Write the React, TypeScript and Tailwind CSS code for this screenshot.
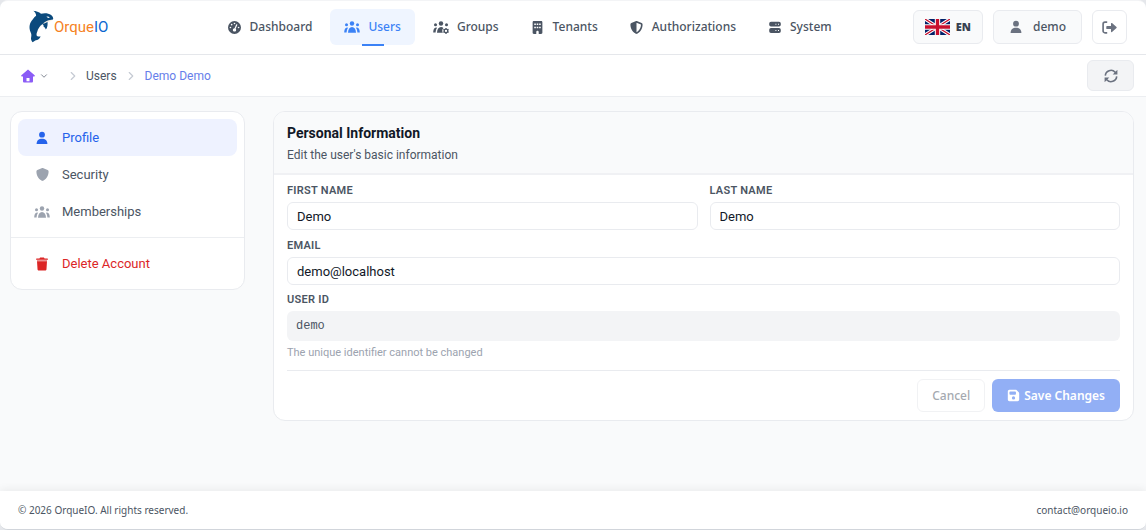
import React, { useState } from "react";
import {
  FaBuilding,
  FaFloppyDisk,
  FaGaugeHigh,
  FaShield,
  FaShieldHalved,
} from "react-icons/fa6";
import { LuChevronDown, LuChevronRight } from "react-icons/lu";

type IconProps = { className?: string };

function PersonIcon({ className }: IconProps) {
  return (
    <svg viewBox="0 0 14 14" fill="currentColor" className={className} aria-hidden="true">
      <circle cx="7" cy="3.700" r="2.900" />
      <path d="M1.600 13c0-3.300 2.200-5.200 5.400-5.200s5.400 1.900 5.400 5.200z" />
    </svg>
  );
}

function PeopleIcon({ className }: IconProps) {
  return (
    <svg viewBox="0 0 16 12" fill="currentColor" className={className} aria-hidden="true">
      <circle cx="8" cy="2.500" r="2.200" />
      <circle cx="2.500" cy="3.700" r="1.500" />
      <circle cx="13.500" cy="3.700" r="1.500" />
      <path d="M4 11.700c.2-3.400 1.700-5.700 4-5.700s3.800 2.300 4 5.700z" />
      <path d="M.2 11.500C.2 8.700 1.100 6.700 3 6.400l1.100.3C3.200 7.900 2.700 9.500 2.600 11.500z" />
      <path d="M15.800 11.500c0-2.800-.9-4.800-2.800-5.100l-1.100.3c.9 1.200 1.400 2.800 1.500 4.800z" />
    </svg>
  );
}

function PeopleGearIcon({ className }: IconProps) {
  return (
    <svg viewBox="0 0 16 13" fill="currentColor" className={className} aria-hidden="true">
      <circle cx="8" cy="2.500" r="2.200" />
      <circle cx="2.500" cy="3.700" r="1.500" />
      <circle cx="13.500" cy="3.700" r="1.500" />
      <path d="M4 11.700c.2-3.400 1.700-5.700 4-5.700 1 0 1.800.4 2.400 1-1.200 1.200-1.500 3.100-.6 4.700z" />
      <path d="M.2 11.500C.2 8.700 1.100 6.700 3 6.400l1.100.3C3.200 7.900 2.700 9.500 2.600 11.500z" />
      <circle cx="13" cy="9.900" r="1.800" fill="none" stroke="currentColor" strokeWidth="1.300" />
      <path
        d="M13 6.900v1M13 11.900v1M10.400 8.400l.9.500M14.700 10.900l.9.500M10.400 11.400l.9-.5M14.700 8.900l.9-.5"
        stroke="currentColor"
        strokeWidth="1.300"
      />
    </svg>
  );
}

function ServerIcon({ className }: IconProps) {
  return (
    <svg viewBox="0 0 12 13" fill="currentColor" className={className} aria-hidden="true">
      <path
        fillRule="evenodd"
        d="M2 .8h8a1.800 1.800 0 0 1 1.800 1.800v1.200A1.800 1.800 0 0 1 10 5.600H2A1.800 1.800 0 0 1 .2 3.800v-1.200A1.800 1.800 0 0 1 2 .8zM6.400 2.700v1h1v-1zM9 2.700v1h1v-1z"
      />
      <path
        fillRule="evenodd"
        d="M2 7h8a1.800 1.800 0 0 1 1.800 1.800v1.400A1.800 1.800 0 0 1 10 12H2a1.800 1.800 0 0 1-1.800-1.800V8.800A1.800 1.800 0 0 1 2 7zM6.400 9v1h1V9zM9 9v1h1V9z"
      />
    </svg>
  );
}

function HomeIcon({ className }: IconProps) {
  return (
    <svg viewBox="0 0 14 14" fill="currentColor" className={className} aria-hidden="true">
      <path
        fillRule="evenodd"
        d="M7 .5 13.600 6.300c.5.500.2 1.200-.4 1.200H12v4.700c0 .8-.5 1.300-1.300 1.300H3.300c-.8 0-1.300-.5-1.300-1.300V7.500H.8c-.6 0-.9-.7-.4-1.200zM5.500 9v3.200h3V9z"
      />
    </svg>
  );
}

function TrashIcon({ className }: IconProps) {
  return (
    <svg viewBox="0 0 12 14" fill="currentColor" className={className} aria-hidden="true">
      <path d="M4.100.5h3.800l.7.900h2.800c.3 0 .5.200.5.500v.8H.1v-.8c0-.3.200-.5.500-.5h2.800z" />
      <path d="M1 4.200h10l-.5 8.100c-.1.800-.6 1.300-1.400 1.300H2.900c-.8 0-1.300-.5-1.400-1.300z" />
      <path d="M1 2.700h10v1.500H1z" opacity=".5" />
    </svg>
  );
}

function LogoutIcon({ className }: IconProps) {
  return (
    <svg viewBox="0 0 15 13" fill="currentColor" className={className} aria-hidden="true">
      <path
        d="M5.200 1.200H3A1.900 1.900 0 0 0 1.100 3.100v6.800A1.900 1.900 0 0 0 3 11.800h2.200"
        fill="none"
        stroke="currentColor"
        strokeWidth="1.700"
      />
      <path d="M5 5h4V2.500c0-.6.600-.8 1-.4l4.500 4c.3.300.3.600 0 .9L10 11c-.4.400-1 .1-1-.4V8.100H5c-.4 0-.7-.3-.7-.7V5.700c0-.4.300-.7.700-.7z" />
    </svg>
  );
}

function RefreshIcon({ className }: IconProps) {
  return (
    <svg viewBox="0 0 14 14" fill="currentColor" className={className} aria-hidden="true">
      <path
        d="M1.300 6.600A5.700 5.700 0 0 1 11.200 3.200l1 1.200M12.700 7.400A5.700 5.700 0 0 1 2.800 10.800l-1-1.200"
        fill="none"
        stroke="currentColor"
        strokeWidth="1.600"
      />
      <path d="M13.400.8v4.700H8.700zM.6 13.200V8.500h4.700z" />
    </svg>
  );
}

function OrcaLogo({ className }: IconProps) {
  return (
    <svg viewBox="84 30 80 102" className={className} aria-hidden="true">
      <path fill="#f7efe3" d="M160 58c-4 5-10 7-18 8l-12 8c-8 4-14 10-17 22l-8 12-6-6 12-32 22-10z" />
      <path
        fill="#0b4a7d"
        d="M99 31c10 1 19 4 25 9 11-3 23-2 31 4 5 4 8 9 6 14-7 1-12 1-18 4-6 4-10 5-14 10-9 6-14 14-17 24-2 5-2 8-1 12 4 3 7 3 12 2-3 7-9 11-15 12-4 2-6 5-10 6-4-5-6-11-4-18 1-5 0-8-2-13-6-14-4-29 7-40 3-5 6-8 10-11 0-6-4-12-10-16z"
      />
      <path fill="#0b4a7d" d="M124 69c8 3 13 1 20-4 1 9 0 18-5 24-2-5-4-8-7-9 1-4-2-8-8-11z" />
      <path fill="#fff" d="M141 49c4-1 8 0 10 3-4 2-8 1-10-3z" />
    </svg>
  );
}

function BritishFlag({ className }: IconProps) {
  return (
    <svg viewBox="0 0 60 38" preserveAspectRatio="none" className={className} aria-hidden="true">
      <path fill="#012169" d="M0 0h60v38H0z" />
      <path d="m0 0 60 38M60 0 0 38" stroke="#fff" strokeWidth="8" />
      <path d="m0 0 60 38M60 0 0 38" stroke="#c8102e" strokeWidth="3" />
      <path d="M30 0v38M0 19h60" stroke="#fff" strokeWidth="13" />
      <path d="M30 0v38M0 19h60" stroke="#c8102e" strokeWidth="8" />
    </svg>
  );
}

const navItems = [
  { label: "Dashboard", icon: <FaGaugeHigh className="size-[13px]" /> },
  { label: "Users", icon: <PeopleIcon className="h-3 w-4" />, active: true },
  { label: "Groups", icon: <PeopleGearIcon className="h-[13px] w-4" /> },
  { label: "Tenants", icon: <FaBuilding className="size-[13px]" /> },
  { label: "Authorizations", icon: <FaShieldHalved className="size-[13px]" /> },
  { label: "System", icon: <ServerIcon className="h-[13px] w-3" /> },
];

function Header() {
  return (
    <header className="flex h-[54px] shrink-0 items-center justify-between border-b border-[#e5e7eb] bg-white pr-[19px] pb-px pl-7 shadow-xs">
      <a href="#home" className="flex items-center font-['Roboto',sans-serif] text-[15px] font-normal">
        <OrcaLogo className="h-[34px] w-[26px]" />
        <span className="text-[#f5821f]">Orque</span>
        <span className="text-[#0b66cf]">IO</span>
      </a>
      <nav className="ml-[38px] flex items-center gap-1" aria-label="Main">
        {navItems.map((item) => (
          <a
            key={item.label}
            href={"#" + item.label.toLowerCase()}
            className={
              item.active
                ? "relative flex h-9 items-center gap-2 rounded-md bg-[#eff5ff] px-3.5 text-[#3b82f6]"
                : "flex h-9 items-center gap-2 rounded-md px-3.5 text-[#4b5563]"
            }
          >
            <span className="flex min-w-[14px] justify-center">{item.icon}</span>
            {item.label}
            {item.active && (
              <span className="absolute -bottom-px left-1/2 h-0.5 w-[22px] -translate-x-1/2 bg-[#3b82f6]" />
            )}
          </a>
        ))}
      </nav>
      <div className="flex items-center gap-2.5 text-[#4b5563]">
        <button className="flex h-[34px] items-center gap-1.5 rounded-md border border-[#e9ebef] bg-[#f9fafb] px-[11px] text-[11px] font-black text-[#374151]">
          <BritishFlag className="h-4 w-[25px]" />
          EN
        </button>
        <button className="flex h-[34px] items-center gap-2.5 rounded-md border border-[#e9ebef] bg-[#f9fafb] px-[15px]">
          <PersonIcon className="size-[14px] text-[#6b7280]" />
          demo
        </button>
        <button
          aria-label="Log out"
          className="flex h-[34px] w-[35px] items-center justify-center rounded-md border border-[#e9ebef] bg-white text-[#6b7280]"
        >
          <LogoutIcon className="h-[13px] w-[15px]" />
        </button>
      </div>
    </header>
  );
}

function Breadcrumbs() {
  return (
    <div className="flex h-[42px] shrink-0 items-center justify-between border-b border-[#eceef1] bg-white pr-3 pl-[21px] text-[12px]">
      <nav aria-label="Breadcrumb" className="flex items-center">
        <button aria-label="Home menu" className="flex items-center gap-1">
          <HomeIcon className="size-[14px] text-[#8b5cf6]" />
          <LuChevronDown className="size-2.5 text-[#6b7280]" />
        </button>
        <LuChevronRight className="mr-1.5 ml-[17px] size-3.5 text-[#c5cad3]" />
        <a href="#users" className="text-[#4b5563]">
          Users
        </a>
        <LuChevronRight className="mx-[7px] size-3.5 text-[#c5cad3]" />
        <span className="text-[#667eea]">Demo Demo</span>
      </nav>
      <button
        aria-label="Refresh"
        className="flex h-[31px] w-[47px] items-center justify-center rounded-md border border-[#e9ebef] bg-[#f3f4f6] text-[#6b7280]"
      >
        <RefreshIcon className="size-[14px]" />
      </button>
    </div>
  );
}

function Sidebar() {
  const row = "flex h-[37px] items-center gap-3 rounded-lg px-4";
  return (
    <aside className="w-[235px] shrink-0 self-start rounded-xl border border-[#e9ebef] bg-white">
      <div className="p-[7px]">
        <a href="#profile" className={row + " bg-[#eef2ff] text-[#2563eb]"}>
          <span className="flex w-4 justify-center">
            <PersonIcon className="size-[14px]" />
          </span>
          Profile
        </a>
        <a href="#security" className={row + " text-[#4b5563]"}>
          <span className="flex w-4 justify-center text-[#9ca3af]">
            <FaShield className="size-[13px]" />
          </span>
          Security
        </a>
        <a href="#memberships" className={row + " text-[#4b5563]"}>
          <PeopleIcon className="h-3 w-4 text-[#9ca3af]" />
          Memberships
        </a>
      </div>
      <div className="border-t border-[#eceef1] p-[7px]">
        <a href="#delete" className={row + " text-[#dc2626]"}>
          <span className="flex w-4 justify-center">
            <TrashIcon className="h-[14px] w-3" />
          </span>
          Delete Account
        </a>
      </div>
    </aside>
  );
}

const labelClass = "block text-[11px] leading-4 font-semibold tracking-wide text-[#4b5563] uppercase";
const inputClass =
  "mt-[3px] block h-7 w-full rounded-md border border-[#e9ebef] bg-white px-[9px] text-[13px] text-[#111827]";

function Field({ id, label, value }: { id: string; label: string; value: string }) {
  const [text, setText] = useState(value);
  return (
    <div>
      <label htmlFor={id} className={labelClass}>
        {label}
      </label>
      <input id={id} value={text} onChange={(e) => setText(e.target.value)} className={inputClass} />
    </div>
  );
}

function ProfileForm() {
  return (
    <section className="min-w-0 flex-1 self-start overflow-hidden rounded-xl border border-[#e9ebef] bg-white">
      <div className="border-b-2 border-[#f0f1f4] bg-[#f9fafb] px-[13px] pt-[11px] pb-2.5">
        <h1 className="text-[14px] leading-5 font-bold text-[#111827]">Personal Information</h1>
        <p className="mt-1 text-[12px] leading-4 text-[#4b5563]">Edit the user&apos;s basic information</p>
      </div>
      <form className="px-[13px] py-2" onSubmit={(e) => e.preventDefault()}>
        <div className="grid grid-cols-2 gap-3">
          <Field id="first-name" label="First Name" value="Demo" />
          <Field id="last-name" label="Last Name" value="Demo" />
        </div>
        <div className="mt-2">
          <Field id="email" label="Email" value="demo@localhost" />
        </div>
        <div className="mt-[7px]">
          <label htmlFor="user-id" className={labelClass}>
            User ID
          </label>
          <input
            id="user-id"
            readOnly
            value="demo"
            className="mt-[3px] block h-[30px] w-full rounded-md bg-[#f3f4f6] px-[9px] font-['Liberation_Mono',monospace] text-[12px] text-[#4b5563]"
          />
          <p className="mt-1 text-[11px] leading-4 text-[#9ca3af]">The unique identifier cannot be changed</p>
        </div>
        <div className="mt-[9px] flex justify-end gap-[7px] border-t border-[#e9ebef] pt-2 font-['Noto_Sans',sans-serif]">
          <button
            type="button"
            disabled
            className="h-[33px] rounded-md border border-[#e5e7eb] bg-white px-3.5 text-[12px] font-medium text-[#4b5563] opacity-50"
          >
            Cancel
          </button>
          <button
            type="submit"
            disabled
            className="flex h-[33px] items-center gap-1 rounded-md bg-[#92aff5] px-[15px] text-[12px] font-semibold text-white"
          >
            <FaFloppyDisk className="size-[13px]" />
            Save Changes
          </button>
        </div>
      </form>
    </section>
  );
}

export default function App() {
  return (
    <div className="min-h-screen bg-[#e5e7eb] font-['Noto_Sans',sans-serif] text-[12px] font-medium">
      <div className="flex min-h-screen flex-col overflow-hidden rounded-lg border-t border-b border-t-[#f3f4f6] border-b-[#d1d5db] bg-[#f9fafb]">
        <Header />
        <div className="flex flex-1 flex-col font-['Roboto',sans-serif] text-[13px] font-normal">
          <Breadcrumbs />
          <main className="flex flex-1 gap-7 pt-3.5 pr-3 pb-6 pl-2.5">
            <Sidebar />
            <ProfileForm />
          </main>
        </div>
        <footer className="flex h-[38px] shrink-0 items-center justify-between bg-white px-[18px] text-[10px] font-normal text-[#4b5563] shadow-[0_-2px_8px_rgba(0,0,0,0.06)]">
          <p>© 2026 OrqueIO. All rights reserved.</p>
          <a href="mailto:contact@orqueio.io">contact@orqueio.io</a>
        </footer>
      </div>
    </div>
  );
}
